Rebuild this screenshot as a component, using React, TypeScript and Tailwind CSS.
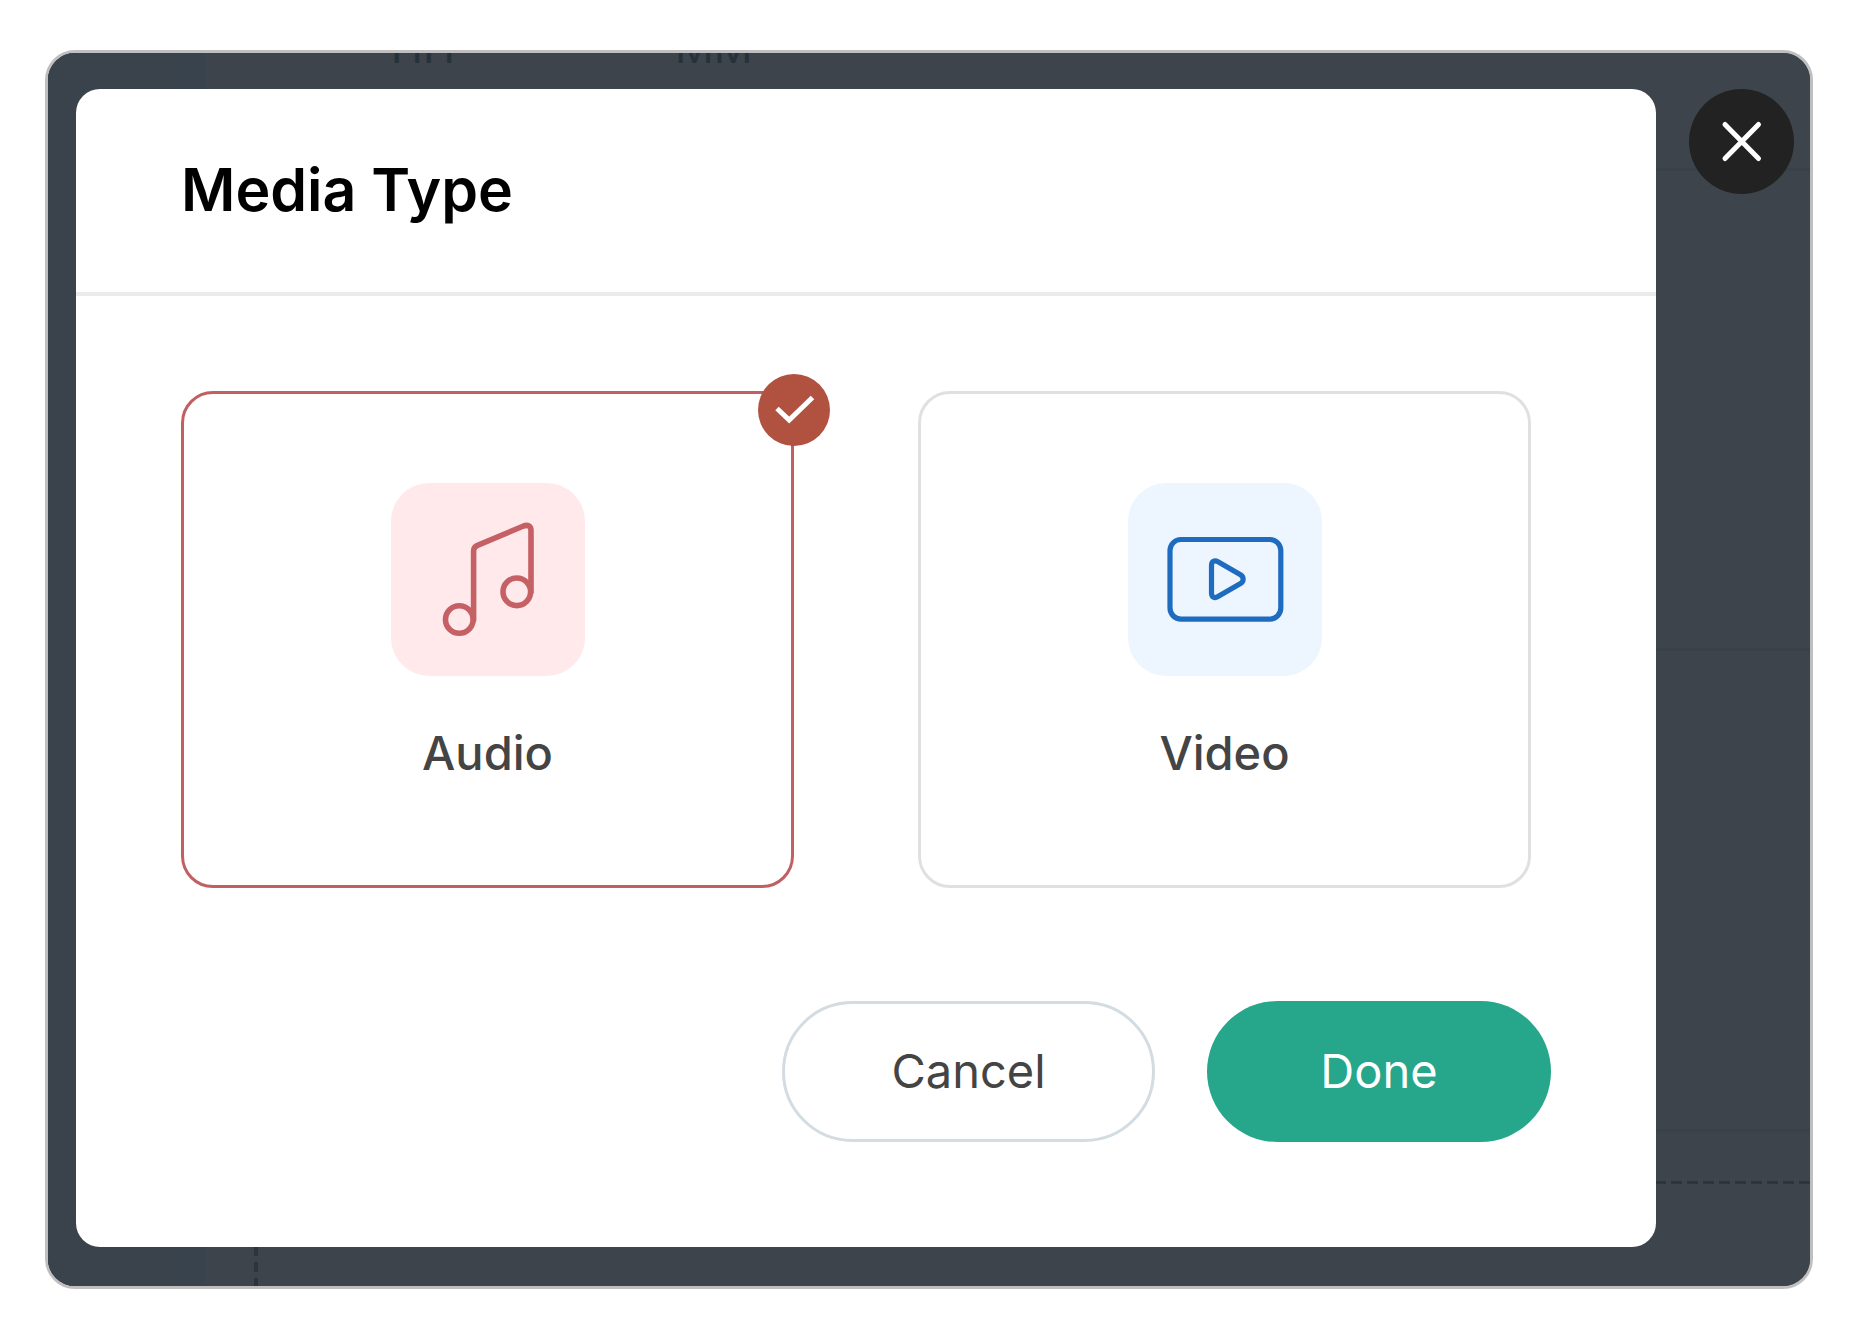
import { useState } from "react";
import type { ReactNode } from "react";

function MusicIcon() {
  return (
    <svg viewBox="0 0 194 193" className="size-full" fill="none" stroke="#c56165" strokeWidth="5.6" strokeLinecap="round" aria-hidden="true">
      <circle cx="68.3" cy="136.5" r="13.8" />
      <circle cx="125.8" cy="108.8" r="13.8" />
      <path d="M82.6 137V68C82.6 65 83.8 63.3 86.5 62.3L132.5 43C137 41.4 140 43 140 47.5V109" />
    </svg>
  );
}

function VideoIcon() {
  return (
    <svg viewBox="0 0 194 193" className="size-full" fill="none" stroke="#1e6cc0" strokeWidth="5.2" strokeLinejoin="round" aria-hidden="true">
      <rect x="42" y="56.5" width="110.8" height="79.6" rx="11" />
      <path d="M83.5 82.5C83.5 78 86.5 76.8 90 78.7L112.5 91.8C116 94 116 98.3 112.5 100.5L90 113.6C86.5 115.6 83.5 114.3 83.5 110Z" />
    </svg>
  );
}

function MediaOption(props: {
  label: string;
  value: string;
  tile: string;
  selected: boolean;
  onSelect: () => void;
  children: ReactNode;
}) {
  return (
    <label
      className={
        "relative flex h-[497px] flex-1 cursor-pointer flex-col items-center rounded-[32px] border-[3px] pt-[89px] " +
        (props.selected ? "border-[#c25f63]" : "border-[#e0e0e0]")
      }
    >
      <input
        type="radio"
        name="media"
        value={props.value}
        checked={props.selected}
        onChange={props.onSelect}
        className="sr-only"
      />
      <span className={"h-[193px] w-[194px] rounded-[38px] " + props.tile}>{props.children}</span>
      <span className="mt-[48px] text-[47px] leading-[58px] font-medium text-[#444444]">{props.label}</span>
      {props.selected && (
        <span className="absolute -top-[20px] -right-[39px] size-[72px] rounded-full bg-[#b0523f]">
          <svg viewBox="0 0 72 72" className="size-full" fill="none" stroke="#ffffff" strokeWidth="5" aria-hidden="true">
            <path d="M19 34.5L31.2 46L54.5 23.5" />
          </svg>
        </span>
      )}
    </label>
  );
}

function Backdrop() {
  return (
    <div aria-hidden="true" className="absolute inset-0 flex bg-[#3d444b]">
      <div className="flex w-[157px] shrink-0 justify-end bg-[#3a424b]">
        <div className="w-[25px] bg-[#39434d]" />
      </div>
      <div className="flex flex-1 flex-col">
        <div className="flex h-[115px] gap-[220px] pl-[186px] text-[43px] leading-[52px] text-[#27313a]">
          <span className="-mt-[32px]">HH</span>
          <span className="-mt-[32px]">MM</span>
        </div>
        <div className="h-[480px] border-t-[3px] border-[#394149]" />
        <div className="h-[481px] border-t-[3px] border-[#394149]" />
        <div className="flex flex-1 flex-col border-t-[3px] border-[#394149] pt-[49px] pl-[49px]">
          <div className="h-[3px] bg-[repeating-linear-gradient(to_left,#2c353c_0_11px,transparent_11px_16px)]" />
          <div className="w-[4px] flex-1 bg-[repeating-linear-gradient(to_top,#2c353c_0_8px,transparent_8px_14px,#2c353c_14px_16px)]" />
        </div>
      </div>
    </div>
  );
}

export default function App() {
  const [media, setMedia] = useState("audio");
  return (
    <main className="min-h-screen bg-white pt-[50px] pr-[47px] pb-[47px] pl-[45px] font-['Inter',sans-serif]">
      <div className="relative overflow-hidden rounded-[30px] border-[3px] border-[#bfbfbf] bg-[#3d444b] pt-[36px] pr-[16px] pb-[39px] pl-[28px]">
        <Backdrop />
        <div className="relative flex items-start gap-[33px]">
          <section role="dialog" aria-labelledby="dialog-title" className="flex-1 rounded-[24px] bg-white">
            <header className="border-b-[4px] border-[#ebebeb] px-[105px] pt-[65px] pb-[66px]">
              <h1 id="dialog-title" className="text-[59px] leading-[72px] font-semibold text-black">
                Media Type
              </h1>
            </header>
            <form className="px-[105px] pt-[95px] pb-[105px]" onSubmit={(e) => e.preventDefault()}>
              <div role="radiogroup" aria-labelledby="dialog-title" className="mr-[20px] flex gap-[124px]">
                <MediaOption label="Audio" value="audio" tile="bg-[#ffe9ea]" selected={media === "audio"} onSelect={() => setMedia("audio")}>
                  <MusicIcon />
                </MediaOption>
                <MediaOption label="Video" value="video" tile="bg-[#edf5ff]" selected={media === "video"} onSelect={() => setMedia("video")}>
                  <VideoIcon />
                </MediaOption>
              </div>
              <div className="mt-[113px] flex justify-end gap-[52px]">
                <button type="button" className="h-[141px] w-[373px] rounded-full border-[3px] border-[#d2dce1] text-[47px] text-[#444444]">
                  Cancel
                </button>
                <button type="submit" className="h-[141px] w-[344px] rounded-full bg-[#26a68a] text-[47px] text-white">
                  Done
                </button>
              </div>
            </form>
          </section>
          <button type="button" aria-label="Close" className="size-[105px] shrink-0 rounded-full bg-[#222222]">
            <svg viewBox="0 0 105 105" className="size-full" fill="none" stroke="#ffffff" strokeWidth="5" strokeLinecap="round" aria-hidden="true">
              <path d="M36 35.5L69.5 69.5M69.5 35.5L36 69.5" />
            </svg>
          </button>
        </div>
      </div>
    </main>
  );
}
